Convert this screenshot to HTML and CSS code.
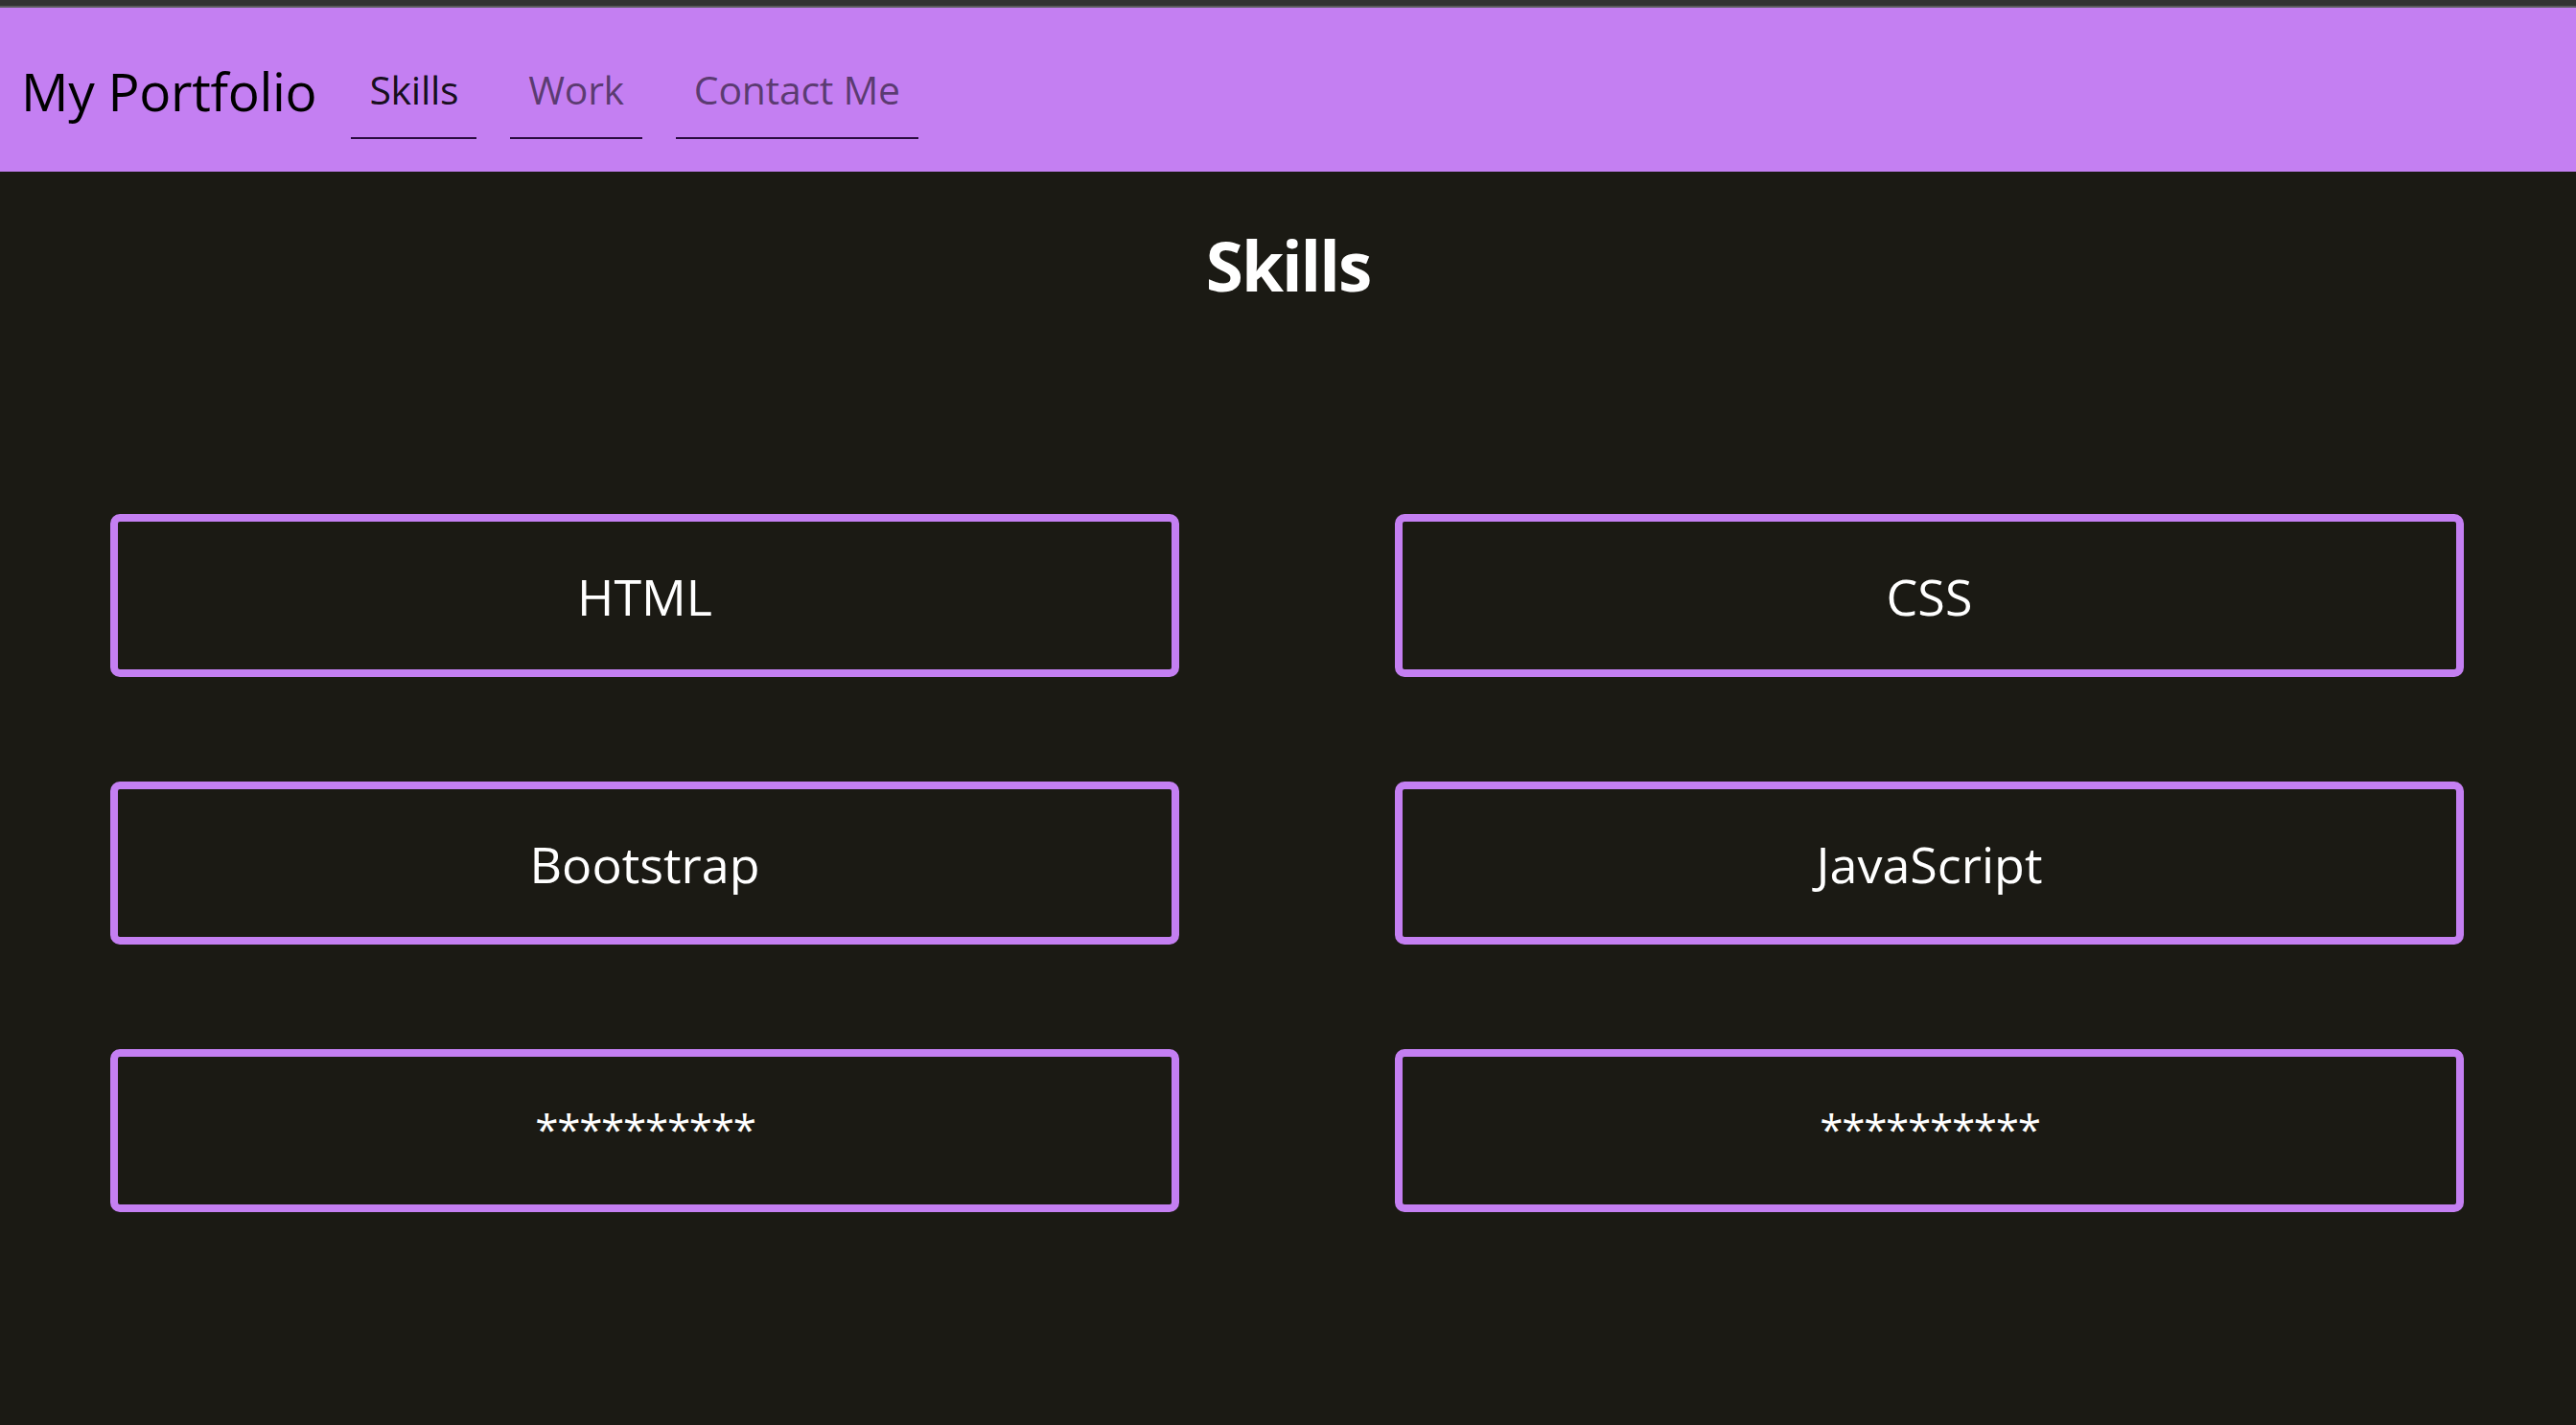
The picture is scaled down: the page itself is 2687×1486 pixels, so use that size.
FILE: index.html
```html
<!DOCTYPE html>
<html lang="en">
<head>
<meta charset="utf-8">
<title>My Portfolio</title>
<link rel="stylesheet" href="styles.css">
</head>
<body>
<div class="topstrip"></div>
<nav class="navbar">
  <a class="brand" href="#">My Portfolio</a>
  <ul class="nav">
    <li><a class="nav-link active" href="#">Skills</a></li>
    <li><a class="nav-link" href="#">Work</a></li>
    <li><a class="nav-link" href="#">Contact Me</a></li>
  </ul>
</nav>
<main class="main">
  <h1 class="title">Skills</h1>
  <div class="grid">
    <div class="card">HTML</div>
    <div class="card">CSS</div>
    <div class="card">Bootstrap</div>
    <div class="card">JavaScript</div>
    <div class="card"><span class="stars">**********</span></div>
    <div class="card"><span class="stars">**********</span></div>
  </div>
</main>
</body>
</html>
```
FILE: styles.css
```css
html, body {
  margin: 0;
  padding: 0;
}
body {
  background: #1b1a14;
  font-family: "Open Sans", "Noto Sans", sans-serif;
  color: #fff;
  min-height: 1486px;
}
.topstrip {
  height: 6px;
  background: #333333;
  border-bottom: 2px solid #5b5b5e;
}
.navbar {
  height: 171px;
  background: #c47ff2;
  display: flex;
  align-items: flex-start;
  padding: 0 22px;
  box-sizing: border-box;
}
.brand {
  font-size: 55px;
  line-height: 78px;
  margin-top: 48px;
  margin-right: 36px;
  color: #000;
  text-decoration: none;
  letter-spacing: -0.3px;
}
.nav {
  list-style: none;
  margin: 0;
  padding: 0;
  display: flex;
  gap: 35px;
}
.nav-link {
  display: block;
  font-size: 41px;
  line-height: 58px;
  margin-top: 46px;
  padding: 10px 19px 21px;
  color: rgba(0, 0, 0, 0.55);
  text-decoration: none;
  border-bottom: 2px solid #2a0c40;
  letter-spacing: -0.3px;
}
.nav-link.active {
  color: rgba(0, 0, 0, 0.9);
}
.main {
  padding-top: 48px;
}
.title {
  margin: 0;
  text-align: center;
  font-size: 71px;
  line-height: 100px;
  font-weight: 700;
  letter-spacing: -2px;
}
.grid {
  display: grid;
  grid-template-columns: 1fr 1fr;
  column-gap: 225px;
  row-gap: 109px;
  padding: 0 117px 0 115px;
  margin-top: 209px;
}
.card {
  height: 170px;
  box-sizing: border-box;
  border: 8px solid #c47ff2;
  border-radius: 10px;
  display: flex;
  align-items: center;
  justify-content: center;
  font-size: 52px;
}
.stars {
  font-size: 44px;
  letter-spacing: -1.3px;
  padding-left: 1px;
  margin-bottom: 4px;
}
```
